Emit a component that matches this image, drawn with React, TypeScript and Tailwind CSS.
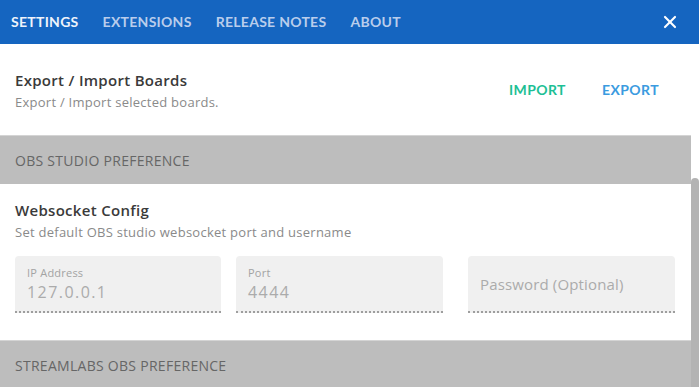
import { X } from "lucide-react";

const tabs = ["Settings", "Extensions", "Release Notes", "About"];

function Field({ label, value, w }: { label?: string; value: string; w: string }) {
  return (
    <div className={`flex h-[57px] shrink-0 flex-col justify-center rounded-t-[4px] border-b-2 border-dotted border-[#9e9e9e] bg-[#f0f0f0] px-3 ${w}`}>
      {label ? (
        <>
          <span className="text-[11px] leading-[14px] tracking-[0.02em] text-[#a3a3a3]">{label}</span>
          <span className="mt-[3px] text-[16px] leading-[18px] tracking-[0.09em] text-[#ababab]">{value}</span>
        </>
      ) : (
        <span className="text-[15px] leading-[18px] tracking-[0.01em] text-[#ababab]">{value}</span>
      )}
    </div>
  );
}

function Band({ children }: { children: React.ReactNode }) {
  return (
    <div className="flex h-[49px] shrink-0 items-center border-t border-[#d4d4d4] bg-[#bdbdbd] px-[15px] text-[14px] uppercase tracking-[0.02em] text-[#666]">
      {children}
    </div>
  );
}

export default function App() {
  return (
    <div className="flex h-[387px] w-full flex-col overflow-hidden bg-white font-['Open_Sans',sans-serif] antialiased">
      <header className="flex h-[44px] shrink-0 items-center bg-[#1565c0] pb-[1px] pl-[11px] pr-[19px] font-['Lato',sans-serif]">
        <nav className="flex gap-[24px]">
          {tabs.map((t, i) => (
            <span
              key={t}
              className={`text-[14px] font-bold uppercase tracking-[0.02em] ${i === 0 ? "text-[#eef3fb]" : "text-[#b9cdec]"}`}
            >
              {t}
            </span>
          ))}
        </nav>
        <X className="ml-auto text-white" size={20} strokeWidth={2.6} />
      </header>

      <div className="flex min-h-0 flex-1">
        <main className="flex min-w-0 flex-1 flex-col">
          <section className="-mr-2 flex h-[91px] shrink-0 items-center pl-[15px] pr-[40px]">
            <div className="flex flex-col">
              <h3 className="text-[15px] font-semibold leading-[20px] tracking-[0.02em] text-[#3a3a3a]">Export / Import Boards</h3>
              <p className="mt-[4px] text-[13px] leading-[16px] tracking-[0.02em] text-[#8a8a8a]">Export / Import selected boards.</p>
            </div>
            <div className="ml-auto flex gap-[36px] font-['Lato',sans-serif] text-[14px] font-bold tracking-[0.03em]">
              <button className="text-[#1dbf95]">IMPORT</button>
              <button className="text-[#3b9be0]">EXPORT</button>
            </div>
          </section>

          <Band>OBS Studio Preference</Band>

          <section className="flex h-[156px] shrink-0 flex-col px-[15px] pt-[16px]">
            <h3 className="text-[15px] font-semibold leading-[20px] tracking-[0.02em] text-[#3a3a3a]">Websocket Config</h3>
            <p className="mt-[4px] text-[13px] leading-[16px] tracking-[0.02em] text-[#8a8a8a]">
              Set default OBS studio websocket port and username
            </p>
            <div className="mt-[16px] flex">
              <Field w="w-[206px]" label="IP Address" value="127.0.0.1" />
              <div className="ml-[15px]">
                <Field w="w-[207px]" label="Port" value="4444" />
              </div>
              <div className="ml-[25px]">
                <Field w="w-[207px]" value="Password (Optional)" />
              </div>
            </div>
          </section>

          <Band>Streamlabs OBS Preference</Band>
        </main>
        <div className="flex w-[8px] shrink-0 flex-col pt-[134px]">
          <div className="flex-1 rounded-t-[4px] bg-[#b3b3b3]" />
        </div>
      </div>
    </div>
  );
}
